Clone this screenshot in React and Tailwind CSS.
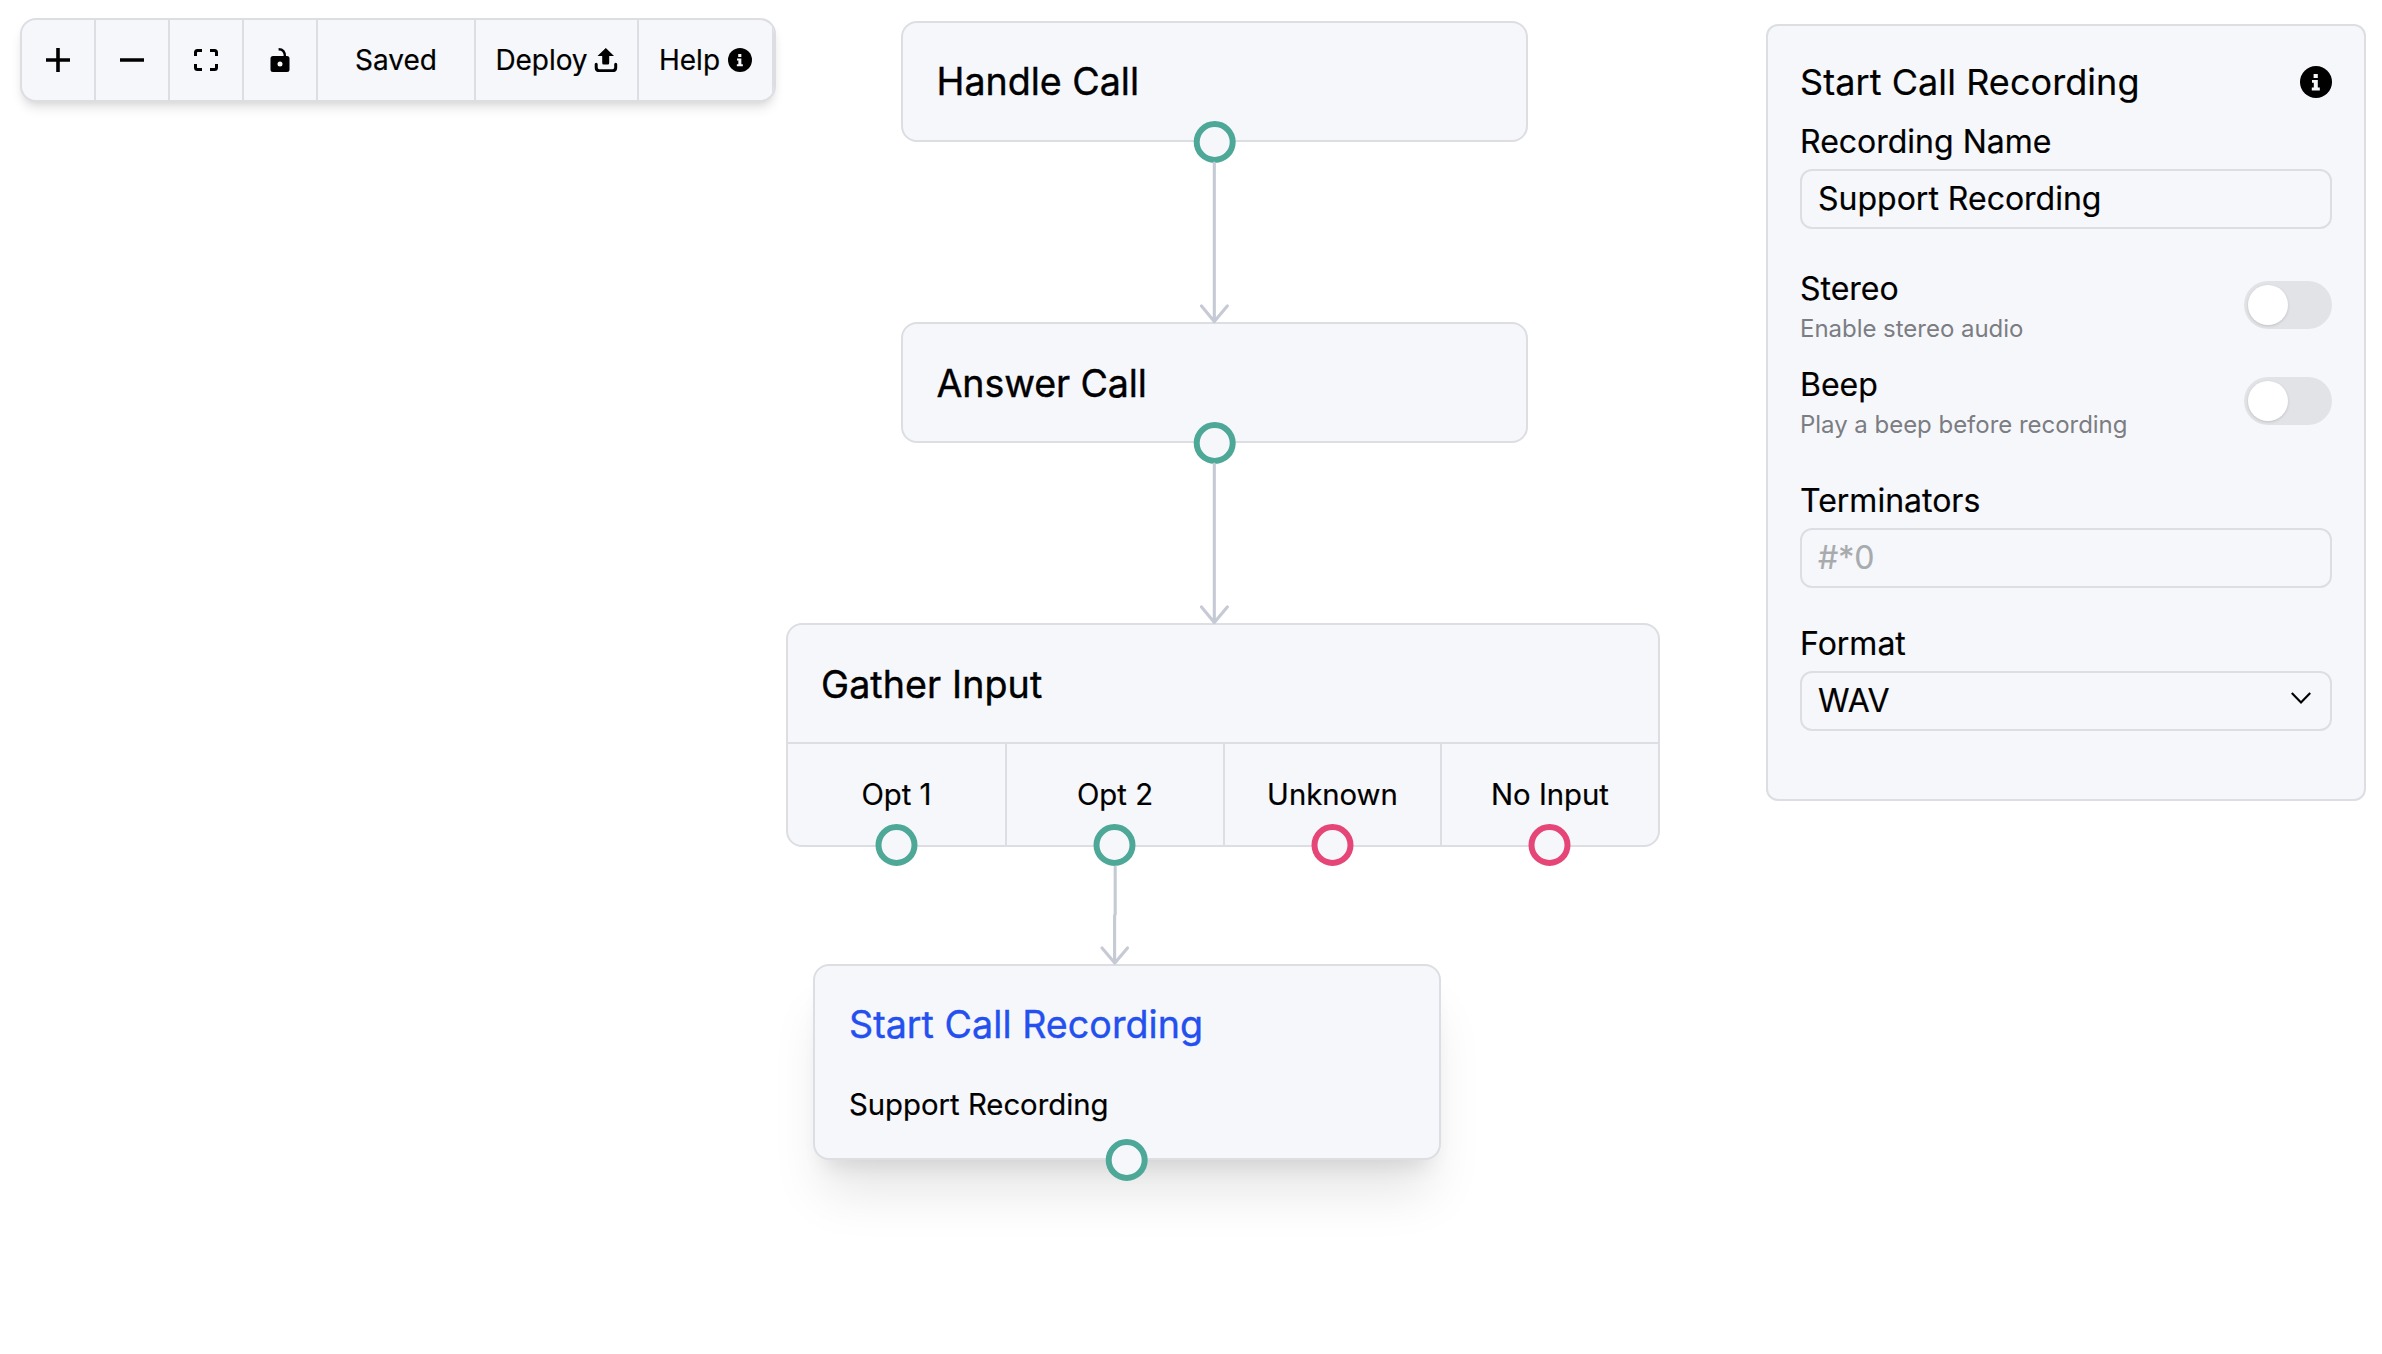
const PORT = {
  ok: 'border-[#4ea897]',
  fail: 'border-[#e54677]'
};

const PlusIcon = () => (
  <svg width="24" height="24" viewBox="0 0 24 24" stroke="currentColor" strokeWidth="3.6">
    <path d="M12 0V24M0 12H24" />
  </svg>
);

const MinusIcon = () => (
  <svg width="24" height="24" viewBox="0 0 24 24" stroke="currentColor" strokeWidth="3.6">
    <path d="M0 12H24" />
  </svg>
);

const FitIcon = () => (
  <svg width="24" height="24" viewBox="0 0 24 24" fill="none" stroke="currentColor" strokeWidth="3">
    <path d="M8 2.5H3.5Q1.5 2.5 1.5 4.5V8M16 2.5H20.5Q22.5 2.5 22.5 4.5V8M8 21.5H3.5Q1.5 21.5 1.5 19.5V16M16 21.5H20.5Q22.5 21.5 22.5 19.5V16" />
  </svg>
);

const UnlockIcon = () => (
  <svg width="24" height="24" viewBox="0 0 24 24">
    <path
      fill="currentColor"
      fillRule="evenodd"
      d="M5 8H19Q21.5 8 21.5 10.5V21.5Q21.5 24 19 24H5Q2.5 24 2.5 21.5V10.5Q2.5 8 5 8ZM12 13.4a2.5 2.5 0 1 0 0 5a2.5 2.5 0 1 0 0-5Z"
    />
    <path d="M10.6 1.3Q17 1.3 17 9" fill="none" stroke="currentColor" strokeWidth="2.4" />
  </svg>
);

const UploadIcon = () => (
  <svg width="24" height="24" viewBox="0 0 24 24">
    <path fill="currentColor" d="M11.8 0L20 8H15.2V15Q15.2 16.5 13.7 16.5H9.7Q8.2 16.5 8.2 15V8H3.5Z" />
    <path
      d="M2.2 16.2V19.5Q2.2 22.7 5.4 22.7H18.5Q21.7 22.7 21.7 19.5V16.2"
      fill="none"
      stroke="currentColor"
      strokeWidth="3"
      strokeLinecap="round"
    />
  </svg>
);

const InfoIcon = ({ size }) => (
  <svg width={size} height={size} viewBox="0 0 32 32">
    <circle cx="16" cy="16" r="16" fill="currentColor" />
    <path fill="#f6f7fb" d="M13.6 8h4.2v4h-4.2zM12 14h5.8v7.6h2v2.8h-8v-2.8h2v-4.8h-1.8z" />
  </svg>
);

const Port = ({ kind = 'ok', className = '-bottom-[23px] -translate-x-[21.3px]' }) => (
  <span className={`absolute left-1/2 size-[42px] rounded-full border-[6px] bg-[#f6f7fb] ${PORT[kind]} ${className}`} />
);

const NodeTitle = ({ className = '', children }) => (
  <h2 className={`text-[37.6px] leading-[56px] [-webkit-text-stroke:0.4px] ${className}`}>{children}</h2>
);

const nodeBase = 'absolute rounded-2xl border-2 border-[#dcdee3] bg-[#f6f7fb]';

const Canvas = () => (
  <div className="absolute inset-0">
    <div className={`${nodeBase} left-[901px] top-[21px] h-[121px] w-[627px] px-[33.5px] pt-[31px]`}>
      <NodeTitle>Handle Call</NodeTitle>
      <Port />
    </div>

    <div className={`${nodeBase} left-[901px] top-[322px] h-[121px] w-[627px] px-[33.5px] pt-8`}>
      <NodeTitle className="tracking-[-0.1px]">Answer Call</NodeTitle>
      <Port />
    </div>

    <div className={`${nodeBase} left-[786px] top-[623px] h-[224px] w-[874px]`}>
      <NodeTitle className="h-[117px] px-[33px] pt-8 tracking-[0.1px]">Gather Input</NodeTitle>
      <div className="grid h-[103px] grid-cols-[219px_218px_217px_216px] divide-x-2 divide-[#dcdee3] border-t-2 border-[#dcdee3]">
        {[
          ['Opt 1', 'ok'],
          ['Opt 2', 'ok'],
          ['Unknown', 'fail'],
          ['No Input', 'fail']
        ].map(([label, kind]) => (
          <div key={label} className="relative pt-[30px] text-center text-[29.3px] leading-[42px]">
            {label}
            <Port kind={kind} className="-bottom-[21px] -translate-x-[21.5px]" />
          </div>
        ))}
      </div>
    </div>

    <div
      className={`${nodeBase} left-[813px] top-[964px] h-[196px] w-[628px] px-[34px] pt-[31px] shadow-[0_42px_52px_-10px_rgb(0_0_0/0.1),0_17px_21px_-12px_rgb(0_0_0/0.1)]`}
    >
      <NodeTitle className="tracking-[0.05px] text-[#2350ee]">Start Call Recording</NodeTitle>
      <p className="mt-[31px] text-[29.3px] leading-[42px]">Support Recording</p>
      <Port />
    </div>

    <svg
      className="absolute inset-0"
      width="2382"
      height="1354"
      fill="none"
      stroke="#c5cad4"
      strokeWidth="3.1"
      strokeLinecap="round"
      strokeLinejoin="round"
    >
      <path d="M1214.3 163V321.5M1201.5 306L1214.3 321.5L1227.3 306" />
      <path d="M1214.3 464V622.5M1201.5 607L1214.3 622.5L1227.3 607" />
      <path d="M1115.2 867V914L1114.6 916V963M1102 948L1114.8 963L1127.5 948" />
    </svg>
  </div>
);

const Toolbar = () => (
  <div className="relative flex h-[84px] w-[756px] divide-x-2 divide-[#dcdee3] overflow-hidden rounded-2xl border-2 border-[#dcdee3] bg-[#f6f7fb] text-[28px] shadow-[0_8px_12px_-2px_rgb(0_0_0/0.1),0_4px_8px_-4px_rgb(0_0_0/0.1)]">
    {[PlusIcon, MinusIcon, FitIcon, UnlockIcon].map((Icon, i) => (
      <button key={i} className="box-content flex w-[72px] items-center justify-center">
        <Icon />
      </button>
    ))}
    <button className="box-content w-[156px]">Saved</button>
    <button className="box-content flex w-[161px] items-center justify-center gap-1.5 tracking-[-0.05px]">
      Deploy <UploadIcon />
    </button>
    <button className="box-content flex w-[133px] items-center justify-center gap-2 border-r-2 border-[#dcdee3]">
      Help <InfoIcon size={24} />
    </button>
  </div>
);

const Toggle = ({ label, hint }) => (
  <div className="flex h-24 items-start justify-between">
    <div className="pt-px">
      <div className="text-[32px] leading-[48px]">{label}</div>
      <div className="text-2xl leading-8 tracking-[-0.03px] text-[#7b7d82] [-webkit-text-stroke:0px]">{hint}</div>
    </div>
    <div className="mt-[17px] h-12 w-[88px] rounded-full bg-[#e2e3e7] p-1">
      <div className="size-10 rounded-full bg-white shadow-[0_1px_3px_rgb(0_0_0/0.15)]" />
    </div>
  </div>
);

const Field = ({ label, children }) => (
  <div>
    <div className="pt-px text-[32px] leading-[48px]">{label}</div>
    <div className="mt-[3px] flex h-[60px] items-center justify-between rounded-xl border-2 border-[#dcdee3] px-4 text-[32px]">
      {children}
    </div>
  </div>
);

const Panel = () => (
  <aside className="relative h-[777px] w-[600px] rounded-xl border-2 border-[#dcdee3] bg-[#f6f7fb] px-8 pt-7">
    <div className="flex h-14 items-center justify-between text-4xl tracking-[0.07px]">
      Start Call Recording
      <InfoIcon size={32} />
    </div>
    <div className="mt-[7px]">
      <Field label="Recording Name">Support Recording</Field>
    </div>
    <div className="mt-[35px]">
      <Toggle label="Stereo" hint="Enable stereo audio" />
      <Toggle label="Beep" hint="Play a beep before recording" />
    </div>
    <div className="mt-5">
      <Field label="Terminators">
        <span className="text-[#a7abae]">#*0</span>
      </Field>
    </div>
    <div className="mt-[31px]">
      <Field label="Format">
        WAV
        <svg
          className="relative -top-[3px] mr-[3px]"
          width="20"
          height="12"
          viewBox="0 0 20 12"
          fill="none"
          stroke="currentColor"
          strokeWidth="2.2"
        >
          <path d="M0.8 1L10 10.4L19.2 1" />
        </svg>
      </Field>
    </div>
  </aside>
);

export default function App() {
  return (
    <div className="relative h-[1354px] w-[2382px] overflow-hidden bg-white font-['Inter',sans-serif] text-black [-webkit-text-stroke:0.2px]">
      <Canvas />
      <div className="flex items-start justify-between pl-5 pr-4 pt-[18px]">
        <Toolbar />
        <div className="pt-1.5">
          <Panel />
        </div>
      </div>
    </div>
  );
}
